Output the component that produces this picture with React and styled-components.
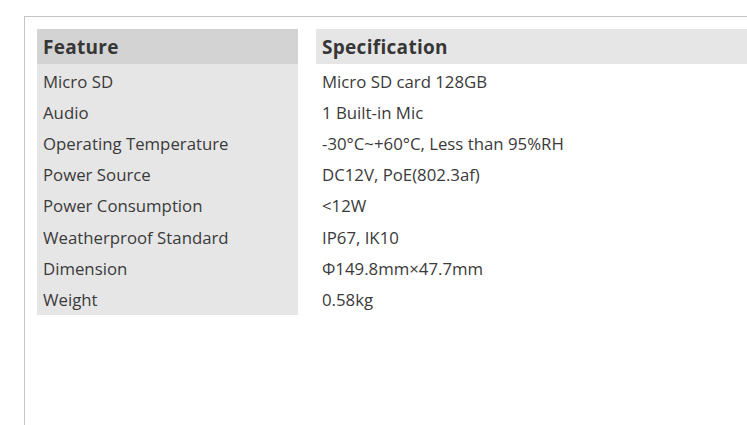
import React from "react";
import styled, { createGlobalStyle } from "styled-components";

const Global = createGlobalStyle`
  html, body { margin: 0; padding: 0; background: #ffffff; }
  body { font-family: "Open Sans", "Noto Sans", sans-serif; }
`;

const Page = styled.div`
  width: 747px;
  height: 425px;
  overflow: hidden;
  padding: 16px 0 0 24px;
  box-sizing: border-box;
`;

const Frame = styled.div`
  border-top: 1px solid #c4c4c4;
  border-left: 1px solid #c4c4c4;
  height: 420px;
  padding: 12px 0 0 12px;
  box-sizing: border-box;
  display: grid;
  grid-template-columns: 261px 1fr;
  column-gap: 18px;
  align-items: start;
`;

const Column = styled.div`
  display: flex;
  flex-direction: column;
  padding-bottom: 1px;
  background: ${(p) => (p.$shaded ? "#e6e6e6" : "#ffffff")};
`;

const Head = styled.div`
  height: 35px;
  display: flex;
  align-items: center;
  padding-left: 6px;
  background: ${(p) => (p.$dark ? "#d3d3d3" : "#e6e6e6")};
  color: #363636;
  font-weight: 700;
  font-size: 19px;
  letter-spacing: 0.3px;
`;

const Cell = styled.div`
  height: 31.2px;
  box-sizing: border-box;
  padding: 3px 0 0 6px;
  display: flex;
  align-items: center;
  color: #3a3a3a;
  font-size: 16.8px;
`;

const rows = [
  ["Micro SD", "Micro SD card 128GB"],
  ["Audio", "1 Built-in Mic"],
  ["Operating Temperature", "-30°C~+60°C, Less than 95%RH"],
  ["Power Source", "DC12V, PoE(802.3af)"],
  ["Power Consumption", "<12W"],
  ["Weatherproof Standard", "IP67, IK10"],
  ["Dimension", "Φ149.8mm×47.7mm"],
  ["Weight", "0.58kg"],
];

export default function App() {
  return (
    <>
      <Global />
      <Page>
        <Frame>
          <Column $shaded>
            <Head $dark>Feature</Head>
            {rows.map(([f]) => (
              <Cell key={f}>{f}</Cell>
            ))}
          </Column>
          <Column>
            <Head>Specification</Head>
            {rows.map(([f, s]) => (
              <Cell key={f}>{s}</Cell>
            ))}
          </Column>
        </Frame>
      </Page>
    </>
  );
}
